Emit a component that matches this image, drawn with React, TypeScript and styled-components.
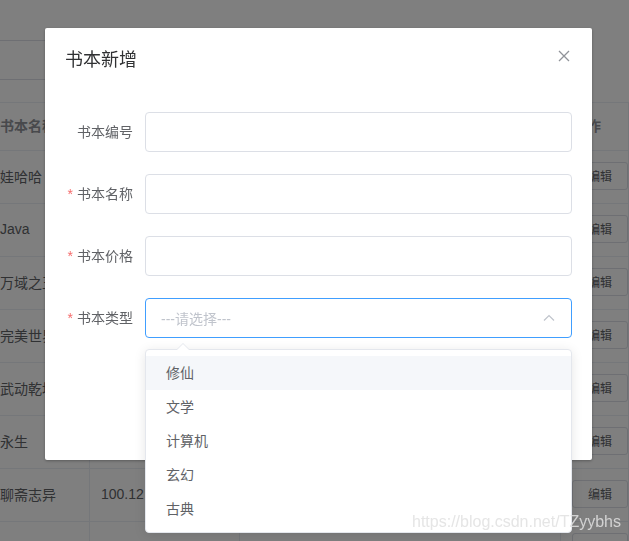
import styled, { createGlobalStyle } from 'styled-components';

const GlobalStyle = createGlobalStyle`
  html, body {
    margin: 0;
    padding: 0;
    width: 629px;
    height: 541px;
    overflow: hidden;
    background: #fff;
  }
  body {
    font-family: "Liberation Sans", "Noto Sans CJK SC", sans-serif;
    font-size: 14px;
    color: #606266;
  }
  * { box-sizing: border-box; }
`;

// ---- page behind the dialog ----

const Page = styled.div`
  padding-top: 40px;
`;

const SearchBar = styled.div`
  width: 320px;
  height: 40px;
  border-top: 1px solid #dcdfe6;
  border-bottom: 1px solid #dcdfe6;
  margin-bottom: 22px;
`;

const Table = styled.div`
  border-top: 1px solid #ebeef5;
`;

const Row = styled.div<{ $head?: boolean }>`
  display: grid;
  grid-template-columns: 90px 150px 1fr 68px;
  height: ${(p) => (p.$head ? 48 : 53)}px;
  border-bottom: 1px solid #ebeef5;
  color: ${(p) => (p.$head ? '#909399' : '#606266')};
  font-weight: ${(p) => (p.$head ? 'bold' : 'normal')};
`;

const Cell = styled.div<{ $pad?: number }>`
  display: flex;
  align-items: center;
  padding-left: ${(p) => p.$pad ?? 10}px;
  padding-bottom: 3px;
  border-right: 1px solid #ebeef5;
  white-space: nowrap;
  overflow: hidden;
`;

const EditButton = styled.button`
  height: 28px;
  padding: 0 15px;
  font: 12px "Liberation Sans", "Noto Sans CJK SC", sans-serif;
  color: #606266;
  background: #fff;
  border: 1px solid #dcdfe6;
  border-radius: 3px;
  white-space: nowrap;
`;

// ---- dialog ----

const Mask = styled.div`
  position: fixed;
  inset: 0;
  background: rgba(0, 0, 0, 0.5);
`;

const Dialog = styled.div`
  position: fixed;
  top: 28px;
  left: 45px;
  width: 547px;
  background: #fff;
  border-radius: 2px;
  box-shadow: 0 1px 3px rgba(0, 0, 0, 0.3);
`;

const DialogHeader = styled.div`
  position: relative;
  padding: 20px 20px 10px;
`;

const Title = styled.span`
  font-size: 18px;
  line-height: 24px;
  color: #303133;
`;

const CloseButton = styled.button`
  position: absolute;
  top: 20px;
  right: 20px;
  width: 16px;
  height: 16px;
  padding: 0;
  border: 0;
  background: none;
  display: flex;
`;

const DialogBody = styled.div`
  padding: 30px 20px;
`;

const FormItem = styled.div`
  display: flex;
  margin-bottom: 22px;
`;

const Label = styled.label<{ $required?: boolean }>`
  width: 80px;
  padding-right: 12px;
  text-align: right;
  line-height: 40px;
  font-size: 14px;
  color: #606266;
  white-space: nowrap;
  &::before {
    content: ${(p) => (p.$required ? '"*"' : 'none')};
    color: #f56c6c;
    margin-right: 4px;
  }
`;

const Input = styled.div<{ $focus?: boolean }>`
  position: relative;
  flex: 1;
  height: 40px;
  border: 1px solid ${(p) => (p.$focus ? '#409eff' : '#dcdfe6')};
  border-radius: 4px;
  padding: 0 15px;
  display: flex;
  align-items: center;
  justify-content: space-between;
`;

const Placeholder = styled.span`
  color: #c0c4cc;
  font-size: 14px;
`;

const Dropdown = styled.ul`
  position: absolute;
  top: 50px;
  left: -1px;
  right: -1px;
  margin: 0;
  padding: 6px 0;
  list-style: none;
  background: #fff;
  border: 1px solid #e4e7ed;
  border-radius: 4px;
  box-shadow: 0 2px 12px rgba(0, 0, 0, 0.1);
  z-index: 5;
  &::before,
  &::after {
    content: "";
    position: absolute;
    left: 31px;
    width: 0;
    height: 0;
    border: 6px solid transparent;
  }
  &::before {
    top: -13px;
    border-bottom-color: #e4e7ed;
  }
  &::after {
    top: -12px;
    border-bottom-color: #fff;
  }
`;

const Option = styled.li<{ $hover?: boolean }>`
  height: 34px;
  line-height: 34px;
  padding: 0 20px;
  font-size: 14px;
  color: #606266;
  background: ${(p) => (p.$hover ? '#f5f7fa' : '#fff')};
`;

const DialogFooter = styled.div`
  display: flex;
  justify-content: flex-end;
  gap: 10px;
  padding: 10px 20px 20px;
`;

const FooterButton = styled.button<{ $primary?: boolean }>`
  height: 40px;
  padding: 0 20px;
  font: 14px "Liberation Sans", "Noto Sans CJK SC", sans-serif;
  border-radius: 4px;
  border: 1px solid ${(p) => (p.$primary ? '#409eff' : '#dcdfe6')};
  background: ${(p) => (p.$primary ? '#409eff' : '#fff')};
  color: ${(p) => (p.$primary ? '#fff' : '#606266')};
`;

const Watermark = styled.div`
  position: fixed;
  left: 412px;
  top: 513px;
  font: 16px "Liberation Sans", sans-serif;
  color: rgba(225, 225, 225, 0.85);
  pointer-events: none;
  white-space: nowrap;
`;

const books = [
  { name: '娃哈哈', price: '12.5', type: '文学' },
  { name: 'Java', price: '88.8', type: '计算机' },
  { name: '万域之王', price: '45', type: '玄幻' },
  { name: '完美世界', price: '66.6', type: '玄幻' },
  { name: '武动乾坤', price: '55', type: '玄幻' },
  { name: '永生', price: '32', type: '修仙' },
  { name: '聊斋志异', price: '100.12', type: '古典' },
  { name: '西游记', price: '78', type: '古典' },
];

const types = ['修仙', '文学', '计算机', '玄幻', '古典'];

const App = () => {
  return (
    <>
      <GlobalStyle />
      <Page>
        <SearchBar />
        <Table>
          <Row $head>
            <Cell $pad={0}>书本名称</Cell>
            <Cell>书本价格</Cell>
            <Cell>书本类型</Cell>
            <Cell $pad={12}>操作</Cell>
          </Row>
          {books.map((b) => (
            <Row key={b.name}>
              <Cell $pad={0}>{b.name}</Cell>
              <Cell $pad={11}>{b.price}</Cell>
              <Cell>{b.type}</Cell>
              <Cell $pad={11}>
                <EditButton>编辑</EditButton>
              </Cell>
            </Row>
          ))}
        </Table>
      </Page>

      <Mask />

      <Dialog>
        <DialogHeader>
          <Title>书本新增</Title>
          <CloseButton aria-label="close">
            <svg width="16" height="16" viewBox="0 0 16 16">
              <path d="M3 3 L13 13 M13 3 L3 13" stroke="#909399" strokeWidth="1.3" fill="none" />
            </svg>
          </CloseButton>
        </DialogHeader>
        <DialogBody>
          <FormItem>
            <Label>书本编号</Label>
            <Input />
          </FormItem>
          <FormItem>
            <Label $required>书本名称</Label>
            <Input />
          </FormItem>
          <FormItem>
            <Label $required>书本价格</Label>
            <Input />
          </FormItem>
          <FormItem>
            <Label $required>书本类型</Label>
            <Input $focus>
              <Placeholder>---请选择---</Placeholder>
              <svg width="14" height="14" viewBox="0 0 14 14">
                <path d="M2 9.5 L7 4.5 L12 9.5" stroke="#c0c4cc" strokeWidth="1.2" fill="none" />
              </svg>
              <Dropdown>
                {types.map((t, i) => (
                  <Option key={t} $hover={i === 0}>
                    {t}
                  </Option>
                ))}
              </Dropdown>
            </Input>
          </FormItem>
        </DialogBody>
        <DialogFooter>
          <FooterButton>取 消</FooterButton>
          <FooterButton $primary>确 定</FooterButton>
        </DialogFooter>
      </Dialog>

      <Watermark>https://blog.csdn.net/TZyybhs</Watermark>
    </>
  );
};

export default App;
